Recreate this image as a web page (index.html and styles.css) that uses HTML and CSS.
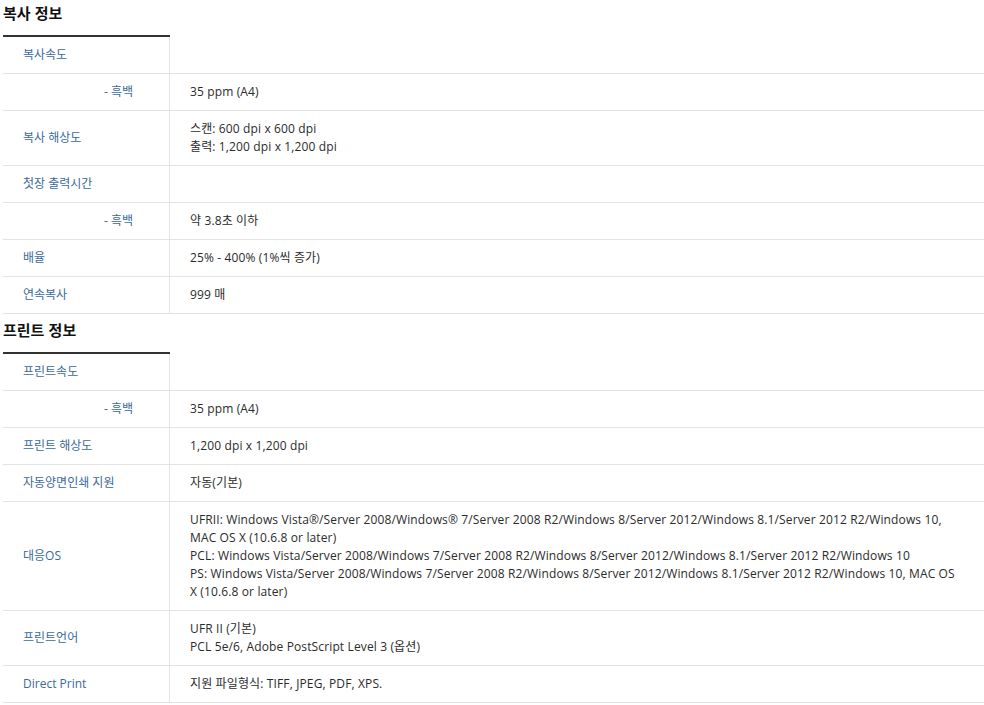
FILE: index.html
```html
<!DOCTYPE html>
<html lang="ko">
<head>
<meta charset="utf-8">
<title>제품 사양</title>
<link rel="stylesheet" href="styles.css">
</head>
<body>
<div class="page">
  <section class="spec">
    <h2 class="spec-title">복사 정보</h2>
    <table class="spec-table">
      <tr class="first"><th>복사속도</th><td></td></tr>
      <tr><th class="sub">- 흑백</th><td>35 ppm (A4)</td></tr>
      <tr><th>복사 해상도</th><td>스캔: 600 dpi x 600 dpi<br>출력: 1,200 dpi x 1,200 dpi</td></tr>
      <tr><th>첫장 출력시간</th><td></td></tr>
      <tr><th class="sub">- 흑백</th><td>약 3.8초 이하</td></tr>
      <tr><th>배율</th><td>25% - 400% (1%씩 증가)</td></tr>
      <tr><th>연속복사</th><td>999 매</td></tr>
    </table>
  </section>
  <section class="spec next">
    <h2 class="spec-title">프린트 정보</h2>
    <table class="spec-table">
      <tr class="first"><th>프린트속도</th><td></td></tr>
      <tr><th class="sub">- 흑백</th><td>35 ppm (A4)</td></tr>
      <tr><th>프린트 해상도</th><td>1,200 dpi x 1,200 dpi</td></tr>
      <tr><th>자동양면인쇄 지원</th><td>자동(기본)</td></tr>
      <tr><th>대응OS</th><td>UFRII: Windows Vista®/Server 2008/Windows® 7/Server 2008 R2/Windows 8/Server 2012/Windows 8.1/Server 2012 R2/Windows 10, MAC OS X (10.6.8 or later)<br>PCL: Windows Vista/Server 2008/Windows 7/Server 2008 R2/Windows 8/Server 2012/Windows 8.1/Server 2012 R2/Windows 10<br>PS: Windows Vista/Server 2008/Windows 7/Server 2008 R2/Windows 8/Server 2012/Windows 8.1/Server 2012 R2/Windows 10, MAC OS X (10.6.8 or later)</td></tr>
      <tr><th>프린트언어</th><td>UFR II (기본)<br>PCL 5e/6, Adobe PostScript Level 3 (옵션)</td></tr>
      <tr><th>Direct Print</th><td>지원 파일형식: TIFF, JPEG, PDF, XPS.</td></tr>
    </table>
  </section>
</div>
</body>
</html>
```
FILE: styles.css
```css
html, body {
  margin: 0;
  padding: 0;
  background: #fff;
}
.page {
  padding: 0 0 0 3px;
  font-family: "Open Sans", "Noto Sans CJK KR", sans-serif;
  font-size: 12px;
  line-height: 18px;
  color: #333;
}
.spec.next {
  margin-top: 3px;
}
.spec-title {
  margin: 0;
  height: 35px;
  font-size: 15px;
  line-height: 25px;
  font-weight: bold;
  color: #111;
  font-family: "Noto Sans CJK KR", sans-serif;
}
.spec-table {
  width: 100%;
  border-collapse: collapse;
  border-spacing: 0;
}
.spec-table th,
.spec-table td {
  padding: 9px 0;
  border-bottom: 1px solid #e3e3e3;
  vertical-align: middle;
  text-align: left;
}
.spec-table th {
  width: 146px;
  padding-left: 20px;
  font-weight: normal;
  color: #3a6a9c;
  border-right: 1px solid #e3e3e3;
}
.spec-table th.sub {
  text-align: right;
  padding-left: 0;
  padding-right: 36px;
  width: 130px;
}
.spec-table td {
  padding-left: 20px;
  padding-right: 20px;
  letter-spacing: 0.13px;
  color: #2b2b2b;
}
.spec-table tr.first th {
  border-top: 2px solid #333;
}
```
